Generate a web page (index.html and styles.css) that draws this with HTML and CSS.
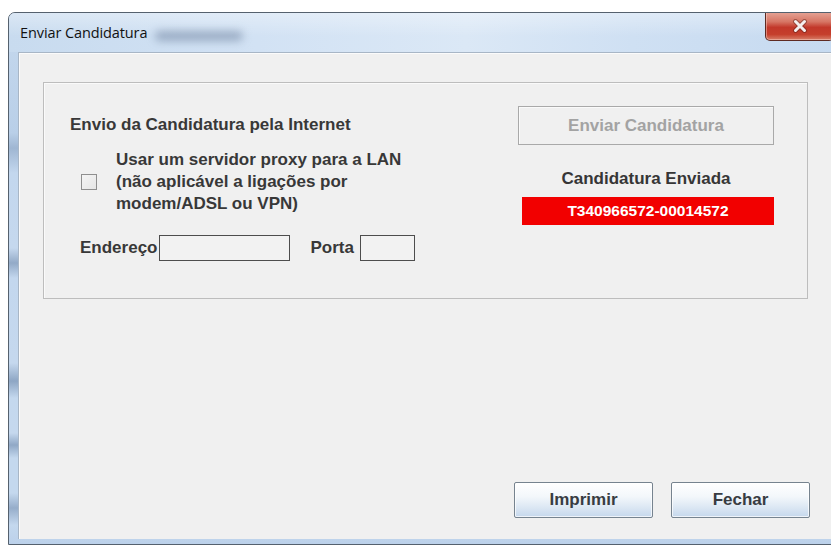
FILE: index.html
```html
<!DOCTYPE html>
<html lang="pt">
<head>
<meta charset="utf-8">
<title>Enviar Candidatura</title>
<link rel="stylesheet" href="styles.css">
</head>
<body>
<div class="window">
  <div class="titlebar">
    <span class="title">Enviar Candidatura</span>
    <span class="title-smudge"></span>
    <button class="close" type="button" aria-label="Fechar janela">
      <svg width="16" height="14" viewBox="0 0 16 14">
        <path d="M3.5 2.5 L12.5 11.5 M12.5 2.5 L3.5 11.5" stroke="#5a2018" stroke-width="5" stroke-linecap="round" opacity="0.45"/>
        <path d="M3.5 2.5 L12.5 11.5 M12.5 2.5 L3.5 11.5" stroke="#f4eeee" stroke-width="3" stroke-linecap="round"/>
      </svg>
    </button>
  </div>
  <div class="frame">
    <div class="content">
      <div class="main">
        <div class="group">
          <div class="left">
            <div class="heading">Envio da Candidatura pela Internet</div>
            <label class="proxy">
              <span class="checkbox"></span>
              <span class="proxy-text">Usar um servidor proxy para a LAN<br>(não aplicável a ligações por<br>modem/ADSL ou VPN)</span>
            </label>
            <div class="address-row">
              <span class="field-label">Endereço</span>
              <span class="field field-wide"></span>
              <span class="field-label porta">Porta</span>
              <span class="field field-narrow"></span>
            </div>
          </div>
          <div class="right">
            <div class="btn-disabled">Enviar Candidatura</div>
            <div class="sent-label">Candidatura Enviada</div>
            <div class="sent-code">T340966572-00014572</div>
          </div>
        </div>
        <div class="actions">
          <button class="btn" type="button">Imprimir</button>
          <button class="btn" type="button">Fechar</button>
        </div>
      </div>
    </div>
  </div>
</div>
</body>
</html>
```
FILE: styles.css
```css
html, body {
  margin: 0;
  background: #ffffff;
  width: 831px;
  height: 545px;
  overflow: hidden;
}

body {
  box-sizing: border-box;
  padding: 12px 0 0 8px;
}

/* Windows 7 style frame */
.window {
  box-sizing: border-box;
  width: 833px;
  height: 533px;
  border: 1px solid #55616e;
  border-radius: 7px 7px 0 0;
  background:
    linear-gradient(180deg,
      #c6d9ee 0px, #b9cfe8 120px, #9fb6d2 135px, #c3d7ee 160px,
      #c5d8ee 235px, #93aac7 250px, #c3d7ee 265px,
      #c5d8ee 350px, #8ea6c4 368px, #c4d8ee 385px,
      #c5d8ee 420px, #90a8c6 432px, #c4d8ee 445px,
      #c4d8ee 480px, #96adca 495px, #c4d8ee 512px, #bcd1ea 100%);
  display: flex;
  flex-direction: column;
  overflow: hidden;
}

.titlebar {
  height: 39px;
  flex: none;
  display: flex;
  align-items: flex-start;
  background:
    linear-gradient(180deg, rgba(255,255,255,0.35) 0%, rgba(255,255,255,0) 60%),
    linear-gradient(90deg, #c8dbef 0%, #d2e2f4 30%, #dbe8f6 55%, #cfe0f3 75%, #c6daf0 100%);
}

.title {
  margin: 11px 0 0 11px;
  font: 14.5px/17px "Open Sans", "DejaVu Sans", sans-serif;
  color: #111111;
  letter-spacing: -0.1px;
}

.title-smudge {
  width: 88px;
  height: 10px;
  margin: 18px 0 0 8px;
  background: rgba(100, 120, 150, 0.5);
  border-radius: 5px;
  filter: blur(4px);
}

.close {
  margin: -1px 6px 0 auto;
  width: 69px;
  height: 29px;
  padding: 0;
  border: 1px solid #5e2a22;
  border-top: none;
  border-radius: 0 0 5px 5px;
  background: linear-gradient(180deg, #e6a597 0%, #d67564 35%, #c2382a 55%, #c53f2c 80%, #d8806a 100%);
  box-shadow: inset 0 0 0 1px rgba(255, 220, 210, 0.45);
  display: flex;
  align-items: center;
  justify-content: center;
}

.frame {
  flex: 1;
  display: flex;
  padding: 0 0 5px 9px;
}

.content {
  flex: 1;
  background: #f0f0f0;
  border-top: 1px solid #a8b6c6;
  border-left: 1px solid #a8b6c6;
  box-shadow: inset 1px 1px 0 #fbfbfb;
  display: flex;
  font-family: "Liberation Sans", Arial, sans-serif;
  font-weight: bold;
  font-size: 17px;
  color: #383838;
}

.main {
  width: 767px;
  margin-left: 24px;
  padding-top: 29px;
  display: flex;
  flex-direction: column;
}

/* Titled panel around the sending controls */
.group {
  box-sizing: border-box;
  width: 765px;
  height: 217px;
  border: 1px solid #bdbdbd;
  box-shadow: inset 1px 1px 0 #fafafa;
  display: flex;
  justify-content: space-between;
}

.left {
  padding: 32px 0 0 26px;
}

.heading {
  line-height: 20px;
}

.proxy {
  display: flex;
  align-items: center;
  margin: 14px 0 0 11px;
}

.checkbox {
  width: 14px;
  height: 14px;
  border: 1px solid #8f8f8f;
  background: linear-gradient(135deg, #f4f4f4, #e6e6e6);
  flex: none;
}

.proxy-text {
  margin-left: 19px;
  line-height: 22px;
}

.address-row {
  display: flex;
  align-items: center;
  margin: 20px 0 0 10px;
}

.field {
  box-sizing: border-box;
  height: 26px;
  border: 1px solid #4d4d4d;
  background: #f2f2f2;
}

.field-label {
  margin-right: 2px;
}

.field-wide {
  width: 131px;
}

.porta {
  margin-left: 20px;
  margin-right: 6px;
}

.field-narrow {
  width: 55px;
}

.right {
  width: 256px;
  margin: 23px 33px 0 0;
  display: flex;
  flex-direction: column;
  align-items: center;
}

.btn-disabled {
  box-sizing: border-box;
  width: 256px;
  height: 39px;
  border: 1px solid #a9a9a9;
  box-shadow: inset 1px 1px 0 #fafafa;
  color: #a3a3a3;
  display: flex;
  align-items: center;
  justify-content: center;
  line-height: 1;
}

.sent-label {
  margin-top: 24px;
  line-height: 20px;
  color: #363636;
}

.sent-code {
  align-self: flex-end;
  width: 252px;
  height: 28px;
  margin-top: 8px;
  background: #f20000;
  color: #ffffff;
  font-size: 15.5px;
  display: flex;
  align-items: center;
  justify-content: center;
}

.actions {
  margin-top: auto;
  margin-bottom: 21px;
  display: flex;
  justify-content: flex-end;
  gap: 18px;
}

.btn {
  box-sizing: border-box;
  width: 139px;
  height: 36px;
  padding: 0;
  border: 1px solid #76838f;
  border-radius: 2px;
  background: linear-gradient(180deg, #ffffff 0%, #f3f7fb 40%, #dde8f4 70%, #c5d7ec 100%);
  box-shadow: inset 0 0 0 1px rgba(255, 255, 255, 0.7);
  font: bold 17px "Liberation Sans", Arial, sans-serif;
  color: #383c42;
}
```
